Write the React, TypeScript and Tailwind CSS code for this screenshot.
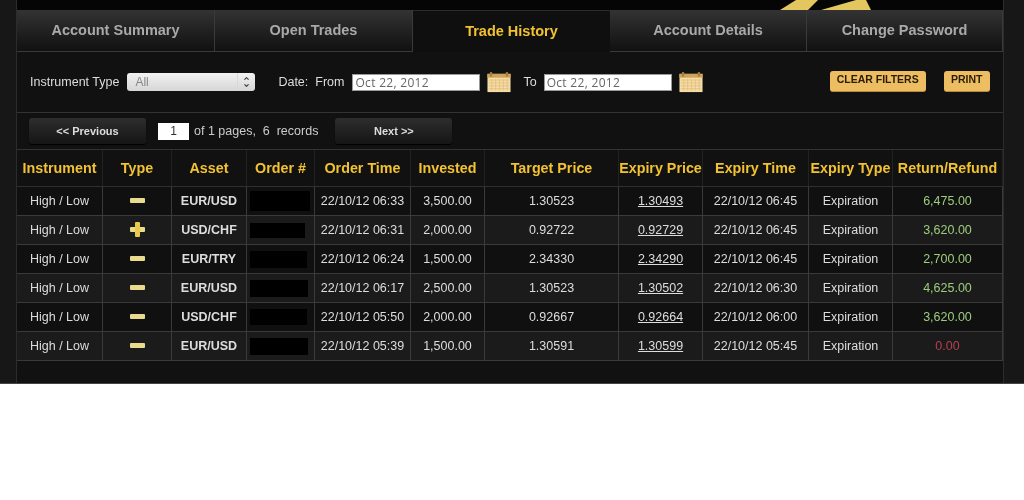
import { ChevronDown, ChevronUp } from "lucide-react";

const tabs = ["Account Summary", "Open Trades", "Trade History", "Account Details", "Change Password"];

const columns = ["Instrument", "Type", "Asset", "Order #", "Order Time", "Invested", "Target Price", "Expiry Price", "Expiry Time", "Expiry Type", "Return/Refund"];

const gridCols = "grid grid-cols-[86px_69px_75px_68px_96px_74px_134px_84px_106px_84px_110px]";

const trades = [
  { type: "-", asset: "EUR/USD", mask: "w-[60px] h-[20px]", time: "22/10/12 06:33", invested: "3,500.00", target: "1.30523", expiry: "1.30493", expiryTime: "22/10/12 06:45", result: "6,475.00" },
  { type: "+", asset: "USD/CHF", mask: "w-[55px] h-[15px]", time: "22/10/12 06:31", invested: "2,000.00", target: "0.92722", expiry: "0.92729", expiryTime: "22/10/12 06:45", result: "3,620.00" },
  { type: "-", asset: "EUR/TRY", mask: "w-[57px] h-[17px]", time: "22/10/12 06:24", invested: "1,500.00", target: "2.34330", expiry: "2.34290", expiryTime: "22/10/12 06:45", result: "2,700.00" },
  { type: "-", asset: "EUR/USD", mask: "w-[58px] h-[17px]", time: "22/10/12 06:17", invested: "2,500.00", target: "1.30523", expiry: "1.30502", expiryTime: "22/10/12 06:30", result: "4,625.00" },
  { type: "-", asset: "USD/CHF", mask: "w-[57px] h-[16px]", time: "22/10/12 05:50", invested: "2,000.00", target: "0.92667", expiry: "0.92664", expiryTime: "22/10/12 06:00", result: "3,620.00" },
  { type: "-", asset: "EUR/USD", mask: "w-[58px] h-[17px]", time: "22/10/12 05:39", invested: "1,500.00", target: "1.30591", expiry: "1.30599", expiryTime: "22/10/12 05:45", result: "0.00" },
];

function CalendarIcon() {
  return (
    <svg width="24" height="22" viewBox="0 0 25 22" className="shrink-0">
      <rect x="0.5" y="2.5" width="24" height="19" fill="#f6dda6" />
      <rect x="0.5" y="2.5" width="24" height="4" fill="#d0a25a" />
      <rect x="3" y="0.5" width="2.5" height="5" rx="1" fill="#a87f42" />
      <rect x="19.5" y="0.5" width="2.5" height="5" rx="1" fill="#a87f42" />
      {[9, 12, 15, 18].map((y) => (
        <line key={y} x1="2" x2="23" y1={y} y2={y} stroke="#e3c283" strokeWidth="1" />
      ))}
      {[5, 9, 13, 17, 21].map((x) => (
        <line key={x} x1={x} x2={x} y1="8" y2="20" stroke="#e3c283" strokeWidth="1" />
      ))}
    </svg>
  );
}

function DateInput() {
  return (
    <div className="w-[128px] h-[17px] bg-white border border-[#999] pl-[2px] text-[12px] leading-[15px] text-[#666] tracking-[0.3px] font-['Open_Sans',sans-serif]">
      Oct 22, 2012
    </div>
  );
}

function PagerButton({ label }: { label: string }) {
  return (
    <div className="w-[117px] h-[26px] rounded-[3px] bg-gradient-to-b from-[#2e2e2e] to-[#151515] shadow-[0_1px_1px_#000] flex items-center justify-center text-[11px] font-bold text-[#ddd]">
      {label}
    </div>
  );
}

function TypeMark({ type }: { type: string }) {
  return (
    <div className="relative w-[15px] h-[15px]">
      <div className="absolute left-0 right-0 top-[5px] h-[5px] rounded-[1px] bg-[#e8dc8c]" />
      {type === "+" && <div className="absolute top-0 bottom-0 left-[5px] w-[5px] rounded-[1px] bg-[#e8c94a]" />}
    </div>
  );
}

export default function App() {
  return (
    <div className="w-[1024px] h-[500px] bg-white overflow-hidden font-['Liberation_Sans',sans-serif]">
      <div className="h-[384px] bg-[#171717] px-[16px] border-b border-[#444] blur-[0.4px]">
        <div className="w-[988px] h-[383px] flex flex-col bg-[#111] border-x border-[#2c2c2c]">
          {/* Logo strip */}
          <div className="h-[10px] bg-[#050505] relative overflow-hidden shrink-0">
            <svg width="100" height="10" viewBox="0 0 100 10" className="absolute left-[762px] top-0">
              <polygon points="1,10 17,0 39,0 29,10" fill="#e3c65f" />
              <polygon points="42,10 77,0 87,0 92,10" fill="#e3c65f" />
            </svg>
          </div>

          {/* Tabs */}
          <div className="grid grid-cols-[198px_198px_197px_197px_196px] h-[42px] shrink-0">
            {tabs.map((tab) => {
              const active = tab === "Trade History";
              return (
                <div
                  key={tab}
                  className={
                    active
                      ? "flex items-center justify-center bg-[#0f0f0f] border-t border-[#2a2a2a] text-[14.5px] font-bold text-[#f2c230]"
                      : "flex items-center justify-center bg-gradient-to-b from-[#333] to-[#111] border-r border-b border-[#3a3a3a] text-[14.5px] font-bold text-[#a9a9a9]"
                  }
                >
                  {tab}
                </div>
              );
            })}
          </div>

          {/* Filters */}
          <div className="h-[61px] shrink-0 border-b border-[#333] flex items-center pl-[13px] text-[12.5px] text-[#ddd]">
            <span>Instrument Type</span>
            <div className="ml-[8px] w-[128px] h-[18px] rounded-[3px] bg-gradient-to-b from-[#f2f2f2] to-[#d6d6d6] flex items-center justify-between pl-[8px] text-[12px] text-[#888]">
              All
              <div className="h-full w-[18px] border-l border-[#d8d8d8] flex flex-col items-center justify-center text-[#444]">
                <ChevronUp size={7} strokeWidth={4} />
                <ChevronDown size={7} strokeWidth={4} />
              </div>
            </div>
            <span className="ml-[23px]">Date:</span>
            <span className="ml-[7px]">From</span>
            <div className="ml-[8px]"><DateInput /></div>
            <div className="ml-[7px]"><CalendarIcon /></div>
            <span className="ml-[12px]">To</span>
            <div className="ml-[7px]"><DateInput /></div>
            <div className="ml-[7px]"><CalendarIcon /></div>
            <div className="ml-[127px] mb-[2px] w-[96px] h-[21px] rounded-[3px] bg-[#edbd62] border-b border-[#b98a3c] flex items-center justify-center text-[10.5px] font-bold text-[#2a1c05] pb-[1px]">
              CLEAR FILTERS
            </div>
            <div className="ml-[18px] mb-[2px] w-[46px] h-[21px] rounded-[3px] bg-[#edbd62] border-b border-[#b98a3c] flex items-center justify-center text-[10.5px] font-bold text-[#2a1c05] pb-[1px]">
              PRINT
            </div>
          </div>

          {/* Pager */}
          <div className="h-[37px] shrink-0 border-b border-[#333] flex items-center pl-[12px] text-[12.5px] text-[#ccc]">
            <PagerButton label="<< Previous" />
            <div className="ml-[12px] w-[31px] h-[17px] bg-white text-center text-[12px] leading-[17px] text-[#333]">1</div>
            <span className="ml-[5px]">of 1 pages,&nbsp; 6&nbsp; records</span>
            <div className="ml-[17px]"><PagerButton label="Next >>" /></div>
          </div>

          {/* Table header */}
          <div className={`${gridCols} h-[37px] shrink-0 border-b border-[#2f2f2f]`}>
            {columns.map((col) => (
              <div key={col} className="flex items-center justify-center whitespace-nowrap overflow-hidden border-r border-[#222] pt-[1px] text-[14.3px] font-bold text-[#f2c230]">
                {col}
              </div>
            ))}
          </div>

          {/* Rows */}
          {trades.map((t, i) => (
            <div
              key={i}
              className={`${gridCols} h-[29px] shrink-0 border-b border-[#3a3a3a] text-[12.5px] text-[#ddd] ${i % 2 === 0 ? "bg-[#101010]" : "bg-[#1b1b1b]"}`}
            >
              <div className="flex items-center justify-center border-r border-[#3a3a3a]">High / Low</div>
              <div className="flex items-center justify-center border-r border-[#3a3a3a] pb-[2px]"><TypeMark type={t.type} /></div>
              <div className="flex items-center justify-center border-r border-[#3a3a3a] font-bold">{t.asset}</div>
              <div className="flex items-center pl-[3px] border-r border-[#3a3a3a]"><div className={`${t.mask} bg-black`} /></div>
              <div className="flex items-center justify-center border-r border-[#3a3a3a]">{t.time}</div>
              <div className="flex items-center justify-center border-r border-[#3a3a3a]">{t.invested}</div>
              <div className="flex items-center justify-center border-r border-[#3a3a3a]">{t.target}</div>
              <div className="flex items-center justify-center border-r border-[#3a3a3a] underline">{t.expiry}</div>
              <div className="flex items-center justify-center border-r border-[#3a3a3a]">{t.expiryTime}</div>
              <div className="flex items-center justify-center border-r border-[#3a3a3a]">Expiration</div>
              <div className={`flex items-center justify-center border-r border-[#3a3a3a] ${t.result === "0.00" ? "text-[#b5414f]" : "text-[#9ccc7c]"}`}>{t.result}</div>
            </div>
          ))}
        </div>
      </div>
    </div>
  );
}
